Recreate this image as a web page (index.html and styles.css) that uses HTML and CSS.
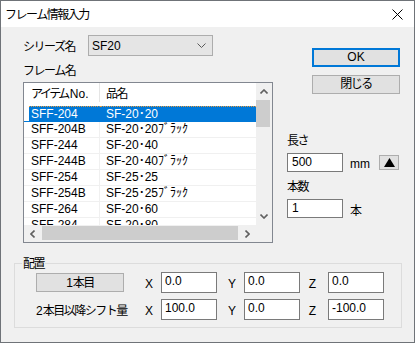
FILE: index.html
```html
<!DOCTYPE html>
<html lang="ja">
<head>
  <meta charset="UTF-8">
  <title>フレーム情報入力</title>
  <link rel="stylesheet" href="styles.css">
</head>
<body>
  <div class="window">
    <div class="titlebar">
      <span class="title jp">フレーム情報入力</span>
      <svg class="close" width="11" height="11" viewBox="0 0 11 11">
        <path d="M0.5 0.5 L10.5 10.5 M10.5 0.5 L0.5 10.5" stroke="#000" stroke-width="1" fill="none"/>
      </svg>
    </div>

    <div class="dialog">
      <div class="top">
        <!-- series + frame list -->
        <div class="left">
          <div class="series-row">
            <span class="series-label jp">シリーズ名</span>
            <div class="combo">
              <span>SF20</span>
              <svg width="9" height="5" viewBox="0 0 9 5">
                <path d="M0.5 0.5 L4.5 4.5 L8.5 0.5" stroke="#5a5a5a" stroke-width="1" fill="none"/>
              </svg>
            </div>
          </div>

          <div class="frame-label jp">フレーム名</div>

          <div class="list">
            <div class="view">
              <div class="list-header">
                <div class="hcell col1"><span class="jp-h">アイテム</span>No.</div>
                <div class="hcell col2"><span class="jp">品名</span></div>
              </div>
              <div class="list-body">
                <div class="row selected"><div class="cell col1">SFF-204</div><div class="cell col2">SF-20･20</div></div>
                <div class="row"><div class="cell col1">SFF-204B</div><div class="cell col2">SF-20･20ﾌﾞﾗｯｸ</div></div>
                <div class="row"><div class="cell col1">SFF-244</div><div class="cell col2">SF-20･40</div></div>
                <div class="row"><div class="cell col1">SFF-244B</div><div class="cell col2">SF-20･40ﾌﾞﾗｯｸ</div></div>
                <div class="row"><div class="cell col1">SFF-254</div><div class="cell col2">SF-25･25</div></div>
                <div class="row"><div class="cell col1">SFF-254B</div><div class="cell col2">SF-25･25ﾌﾞﾗｯｸ</div></div>
                <div class="row"><div class="cell col1">SFF-264</div><div class="cell col2">SF-20･60</div></div>
                <div class="row"><div class="cell col1">SFF-284</div><div class="cell col2">SF-20･80</div></div>
              </div>
            </div>

            <div class="vscroll">
              <div class="arrow">
                <svg width="8" height="5" viewBox="0 0 8 5"><path d="M0.5 4.5 L4 1 L7.5 4.5" stroke="#606060" stroke-width="1.6" fill="none"/></svg>
              </div>
              <div class="vthumb"></div>
              <div class="vspace"></div>
              <div class="arrow">
                <svg width="8" height="5" viewBox="0 0 8 5"><path d="M0.5 0.5 L4 4 L7.5 0.5" stroke="#606060" stroke-width="1.6" fill="none"/></svg>
              </div>
            </div>

            <div class="hscroll">
              <div class="arrow">
                <svg width="5" height="8" viewBox="0 0 5 8"><path d="M4.5 0.5 L1 4 L4.5 7.5" stroke="#606060" stroke-width="1.6" fill="none"/></svg>
              </div>
              <div class="hthumb"></div>
              <div class="arrow">
                <svg width="5" height="8" viewBox="0 0 5 8"><path d="M0.5 0.5 L4 4 L0.5 7.5" stroke="#606060" stroke-width="1.6" fill="none"/></svg>
              </div>
            </div>

            <div class="corner"></div>
          </div>
        </div>

        <!-- buttons + length / count -->
        <div class="right">
          <button class="btn ok">OK</button>
          <button class="btn close-btn jp">閉じる</button>

          <div class="field-label jp">長さ</div>
          <div class="field-row">
            <div class="input">500</div>
            <span class="unit">mm</span>
            <button class="tri">
              <svg width="11" height="9" viewBox="0 0 11 9"><path d="M5.5 0 L11 9 L0 9 Z" fill="#000"/></svg>
            </button>
          </div>

          <div class="field-label count-label jp">本数</div>
          <div class="field-row count-row">
            <div class="input">1</div>
            <span class="unit jp">本</span>
          </div>
        </div>
      </div>

      <fieldset class="placement">
        <legend class="jp">配置</legend>
        <div class="place-grid">
          <button class="btn first-btn"><span>1</span><span class="jp">本目</span></button>
          <span class="axis">X</span><div class="input">0.0</div>
          <span class="axis">Y</span><div class="input">0.0</div>
          <span class="axis axis-z">Z</span><div class="input">0.0</div>

          <span class="shift-label"><span>2</span><span class="jp">本目以降シフト量</span></span>
          <span class="axis">X</span><div class="input">100.0</div>
          <span class="axis">Y</span><div class="input">0.0</div>
          <span class="axis axis-z">Z</span><div class="input">-100.0</div>
        </div>
      </fieldset>
    </div>
  </div>
</body>
</html>
```

FILE: styles.css
```css
body {
  margin: 0;
  font-family: "Liberation Sans", "Noto Sans CJK JP", sans-serif;
  font-size: 12px;
  color: #000;
  background-color: #f0f0f0;
}

.jp {
  font-family: "Noto Sans CJK JP", sans-serif;
  letter-spacing: -1.5px;
}

.jp-h {
  font-family: "Noto Sans CJK JP", sans-serif;
  letter-spacing: -2.5px;
  margin-right: 2px;
}

.window {
  width: 415px;
  height: 343px;
  box-sizing: border-box;
  border: 1px solid #6f7378;
  background-color: #f0f0f0;
  display: flex;
  flex-direction: column;
}

/* title bar */
.titlebar {
  height: 26px;
  background-color: #fff;
  display: flex;
  align-items: center;
  justify-content: space-between;
  padding: 0 11px 0 4px;
}

.title {
  font-size: 12px;
  line-height: 14px;
}

.close {
  display: block;
}

/* dialog body */
.dialog {
  flex: 1;
}

.top {
  display: flex;
  padding-left: 22px;
}

.left {
  width: 250px;
  padding-top: 8px;
}

.series-row {
  display: flex;
  align-items: center;
  height: 21px;
}

.series-label {
  width: 65px;
  line-height: 14px;
}

.combo {
  width: 125px;
  height: 21px;
  box-sizing: border-box;
  border: 1px solid #adadad;
  background-color: #e5e5e5;
  display: flex;
  align-items: center;
  justify-content: space-between;
  padding: 0 6px 0 3px;
}

.frame-label {
  margin-top: 7px;
  margin-bottom: 5px;
  line-height: 14px;
}

/* list view */
.list {
  width: 250px;
  height: 161px;
  box-sizing: border-box;
  border: 1px solid #828790;
  display: grid;
  grid-template-columns: 232px 16px;
  grid-template-rows: 142px 17px;
}

.view {
  background-color: #fff;
  overflow: hidden;
}

.list-header {
  display: flex;
  height: 19px;
  line-height: 19px;
}

.hcell.col1 {
  width: 76px;
  box-sizing: border-box;
  padding-left: 7px;
  border-right: 1px solid #e5e5e5;
}

.hcell.col2 {
  flex: 1;
  padding-left: 6px;
}

.list-body {
  padding-top: 4px;
}

.row {
  display: flex;
  height: 16px;
  box-sizing: border-box;
  border-bottom: 1px solid #f0f0f0;
  line-height: 15px;
  white-space: nowrap;
}

.row .col1 {
  width: 76px;
  box-sizing: border-box;
  padding-left: 7px;
  border-right: 1px solid #f0f0f0;
}

.row .col2 {
  flex: 1;
  padding-left: 6px;
}

.row.selected {
  background: linear-gradient(to right, transparent 5px, #0078d7 5px);
  color: #fff;
  border-bottom-color: #0078d7;
}

.row.selected .col1 {
  border-top: 1px dotted #e89a3c;
  margin-left: 5px;
  padding-left: 2px;
  width: 71px;
  line-height: 14px;
  border-right-color: #0078d7;
}

.row.selected .col2 {
  border-top: 1px dotted #e89a3c;
  line-height: 14px;
}

.vscroll {
  background-color: #f0f0f0;
  display: flex;
  flex-direction: column;
}

.vscroll .arrow {
  height: 17px;
  display: flex;
  align-items: center;
  justify-content: center;
}

.vthumb {
  height: 27px;
  margin: 0 2px 0 0;
  background-color: #cdcdcd;
}

.vspace {
  flex: 1;
}

.hscroll {
  background-color: #f0f0f0;
  display: flex;
}

.hscroll .arrow {
  width: 17px;
  display: flex;
  align-items: center;
  justify-content: center;
}

.hthumb {
  flex: 1;
  margin: 1px 1px 2px 1px;
  background-color: #cdcdcd;
}

.corner {
  background-color: #f0f0f0;
}

/* right column */
.right {
  width: 114px;
  margin-left: 14px;
  padding-top: 21px;
  display: flex;
  flex-direction: column;
}

.btn {
  font-family: "Liberation Sans", "Noto Sans CJK JP", sans-serif;
  font-size: 12px;
  height: 19px;
  padding: 0;
  background-color: #e1e1e1;
  border: 1px solid #adadad;
  color: #000;
  line-height: 15px;
}

.ok {
  width: 88px;
  margin-left: 25px;
  border-color: #0078d7;
  box-shadow: inset 0 0 0 1px #0078d7;
}

.close-btn {
  width: 88px;
  margin-left: 25px;
  margin-top: 8px;
}

.field-label {
  margin-top: 39px;
  line-height: 14px;
}

.count-label {
  margin-top: 7px;
}

.field-row {
  display: flex;
  align-items: center;
  margin-top: 6px;
}

.count-row {
  margin-top: 5px;
}

.input {
  width: 56px;
  height: 19px;
  box-sizing: border-box;
  border: 1px solid #7a7a7a;
  background-color: #fff;
  padding-left: 4px;
  line-height: 16px;
  white-space: nowrap;
}

.unit {
  margin-left: 7px;
  padding-top: 3px;
}

.tri {
  margin-left: auto;
  margin-right: 2px;
  width: 20px;
  height: 15px;
  padding: 0;
  background-color: #e1e1e1;
  border: 1px solid #adadad;
  display: flex;
  align-items: center;
  justify-content: center;
}

/* placement group */
.placement {
  margin: 13px 12px 0 13px;
  padding: 0 0 7px 0;
  border: 1px solid #dcdcdc;
  min-width: 0;
}

.placement legend {
  margin-left: 7px;
  padding: 0 1px;
  line-height: 14px;
}

.place-grid {
  margin: 2px 0 0 21px;
  display: grid;
  grid-template-columns: 88px 37px 56px 27px 56px 28px 56px;
  grid-auto-rows: 21px;
  row-gap: 6px;
  align-items: center;
}

.place-grid .input {
  height: 21px;
  padding-left: 3px;
  line-height: 17px;
}

.first-btn {
  width: 88px;
}

.axis {
  text-align: right;
  padding-right: 8px;
  padding-top: 2px;
}

.axis-z {
  padding-right: 12px;
}

.shift-label {
  white-space: nowrap;
}
```
